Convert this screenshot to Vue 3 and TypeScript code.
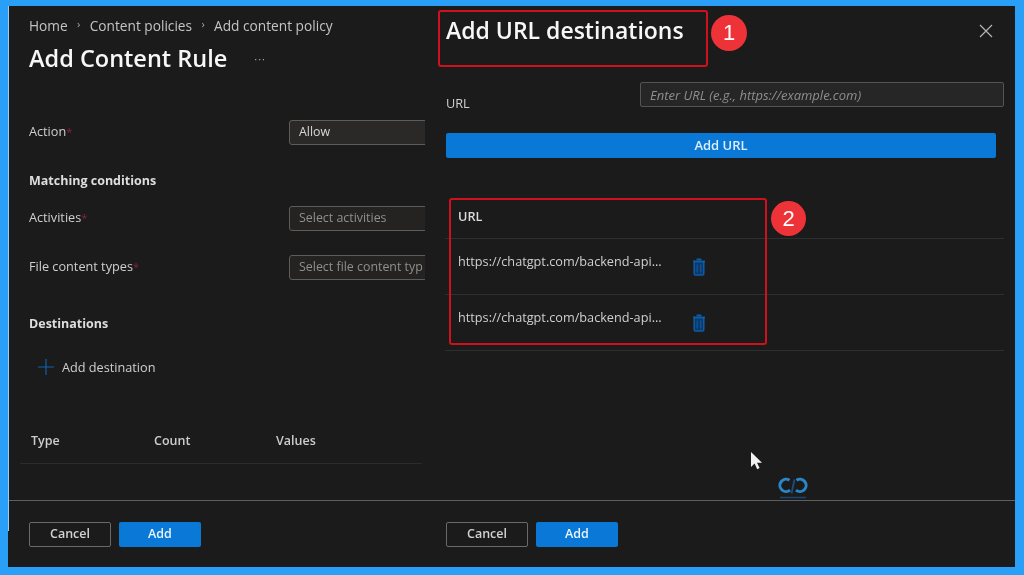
<script setup lang="ts">
const urls: string[] = ['https://chatgpt.com/backend-api...', 'https://chatgpt.com/backend-api...']
const fields = [
  { label: 'Activities', text: 'Select activities', gap: 'first' },
  { label: 'File content types', text: 'Select file content typ', gap: 'next' },
]
</script>

<template>
  <div class="screen">
    <div class="window">
      <div class="pane left">
        <div class="pane-body left-body">
          <nav class="crumbs">
            <span>Home</span><i class="sep">›</i><span>Content policies</span><i class="sep">›</i><span>Add content policy</span>
          </nav>
          <div class="title-row">
            <h1 class="rule-title">Add Content Rule</h1>
            <span class="more">···</span>
          </div>
          <div class="form-row action-row">
            <label>Action<b>*</b></label>
            <div class="select value">Allow</div>
          </div>
          <h2 class="matching">Matching conditions</h2>
          <div v-for="f in fields" :key="f.label" class="form-row" :class="f.gap">
            <label>{{ f.label }}<b>*</b></label>
            <div class="select">{{ f.text }}</div>
          </div>
          <h2 class="destinations">Destinations</h2>
          <div class="add-dest">
            <svg width="16" height="16" viewBox="0 0 16 16" class="plus">
              <path d="M8 0v16M0 8h16" stroke="#0e62ad" stroke-width="1.2" fill="none" />
            </svg>
            <span>Add destination</span>
          </div>
          <div class="dest-table">
            <span>Type</span><span>Count</span><span>Values</span>
          </div>
        </div>
        <footer class="pane-foot">
          <button class="btn ghost" type="button">Cancel</button>
          <button class="btn primary" type="button">Add</button>
        </footer>
      </div>

      <div class="pane right">
        <div class="pane-body right-body">
          <div class="drawer-head">
            <h1>Add URL destinations</h1>
            <svg class="close" width="14" height="14" viewBox="0 0 14 14">
              <path d="M1 1l12 12M13 1L1 13" stroke="#b5b5b5" stroke-width="1.2" fill="none" />
            </svg>
          </div>
          <div class="url-row">
            <label>URL</label>
            <div class="url-input">Enter URL (e.g., https://example.com)</div>
          </div>
          <button class="add-url" type="button">Add URL</button>
          <div class="url-table">
            <div class="url-head">URL</div>
            <div v-for="(u, i) in urls" :key="i" class="url-line">
              <span class="url-text">{{ u }}</span>
              <svg class="trash" width="14" height="18" viewBox="0 0 14 18">
                <path d="M4.6 1.4h4.8M1 3.4h12" stroke="#0f5ca8" stroke-width="1.6" fill="none" />
                <path d="M2.2 3.8h9.6v12a1.3 1.3 0 0 1-1.3 1.3h-7a1.3 1.3 0 0 1-1.3-1.3z" fill="#0b3866" stroke="#0f5ca8" stroke-width="1.5" />
                <path d="M5.2 6.5v8M8.8 6.5v8" stroke="#0f5ca8" stroke-width="1.1" fill="none" />
              </svg>
            </div>
          </div>
        </div>
        <footer class="pane-foot">
          <button class="btn ghost" type="button">Cancel</button>
          <button class="btn primary" type="button">Add</button>
        </footer>
      </div>

      <div class="edge"></div>
      <div class="mark mark-one"></div>
      <div class="badge badge-one">1</div>
      <div class="mark mark-two"></div>
      <div class="badge badge-two">2</div>

      <svg class="cursor" width="14" height="20" viewBox="0 0 14 20">
        <path d="M1 1v15l3.6-3.4 2.6 5.6 2.4-1.1-2.6-5.4h5z" fill="#f2f2f2" />
      </svg>
      <svg class="logo" width="32" height="24" viewBox="0 0 32 24">
        <path d="M12.5 4.2a6.2 6.2 0 1 0 .5 10" stroke="#2a86c8" stroke-width="3" fill="none" />
        <path d="M19.5 4.2a6.2 6.2 0 1 1-.5 10" stroke="#2a86c8" stroke-width="3" fill="none" />
        <path d="M17.5 3.5l-3 14" stroke="#1c4f80" stroke-width="1.8" fill="none" />
        <path d="M3 21.5h26" stroke="#1c4470" stroke-width="1.6" fill="none" />
      </svg>
    </div>
  </div>
</template>

<style>
html, body { margin: 0; padding: 0; }
</style>

<style scoped>
.screen {
  box-sizing: border-box;
  width: 1024px;
  height: 575px;
  padding: 6px 9px 8px 8px;
  background: #2a9ff7;
  font-family: "Open Sans", "Noto Sans", sans-serif;
  font-size: 12.7px;
  color: #cfcfcf;
  overflow: hidden;
}
.window {
  position: relative;
  display: flex;
  height: 100%;
  background: #1b1b1b;
  filter: blur(0.35px);
}
.pane { display: flex; flex-direction: column; min-width: 0; }
.left { width: 417px; flex: none; overflow: hidden; }
.right { flex: 1; }
.pane-body { flex: 1; min-height: 0; padding-left: 21px; }
.pane-foot {
  box-sizing: border-box;
  height: 67px;
  flex: none;
  display: flex;
  gap: 8px;
  padding: 21px 0 0 21px;
  border-top: 1px solid #5e5e5e;
}
.btn {
  box-sizing: border-box;
  width: 82px;
  height: 25px;
  border-radius: 2px;
  font: 600 12.5px "Open Sans", sans-serif;
  padding: 0 0 2px;
}
.ghost { background: transparent; border: 1px solid #6a6a6a; color: #d2d2d2; }
.primary { background: #0a78d6; border: 0; color: #e8f3fc; }

.left-body { padding-top: 10px; }
.crumbs { display: flex; align-items: center; height: 18px; font-size: 13.7px; color: #c4c4c4; white-space: nowrap; }
.sep { font-style: normal; font-size: 11px; width: 22px; text-align: center; margin-top: -3px; color: #a8a8a8; }
.title-row { display: flex; align-items: center; height: 32px; margin-top: 8px; }
h1 { margin: 0; font-size: 23px; font-weight: 600; color: #f7f7f7; line-height: 32px; white-space: nowrap; }
.rule-title { font-size: 23.5px; }
.more { margin-left: 27px; font-size: 11px; color: #aaa; letter-spacing: 1px; }
.form-row { display: flex; align-items: center; height: 25px; white-space: nowrap; }
.form-row label { width: 260px; flex: none; margin-top: -4px; }
.form-row b { color: #8c2236; font-weight: 400; font-size: 11px; }
.action-row { margin-top: 46px; }
.first { margin-top: 15px; }
.next { margin-top: 24px; }
.select {
  box-sizing: border-box;
  flex: none;
  width: 200px;
  height: 25px;
  line-height: 21px;
  padding-left: 9px;
  border: 1px solid #5c5c5c;
  border-radius: 3px;
  background: #242322;
  color: #8f8f8f;
  font-size: 12.4px;
}
.select.value { color: #d8d8d8; font-weight: 500; background: #2a2928; }
h2 { margin: 0; font-weight: 700; line-height: 20px; color: #dedede; font-size: 12.5px; }
.matching { margin-top: 26px; }
.destinations { margin-top: 34px; }
.add-dest { display: flex; align-items: center; gap: 8px; height: 20px; margin-top: 23px; padding-left: 9px; }
.plus { flex: none; }
.dest-table {
  display: grid;
  grid-template-columns: 123px 122px 1fr;
  width: 391px;
  margin: 54px 0 0 -9px;
  padding: 0 0 12px 11px;
  line-height: 20px;
  font-weight: 600;
  font-size: 12.5px;
  color: #cdcdcd;
  border-bottom: 1px solid #2b2b2b;
}

.right-body { padding-right: 11px; }
.drawer-head { display: flex; align-items: center; justify-content: space-between; height: 48px; }
.close { margin-right: 11px; margin-top: 2px; }
.url-row { display: grid; grid-template-columns: 194px 1fr; height: 24px; margin-top: 28px; }
.url-row label { line-height: 20px; margin-top: 11px; }
.url-input {
  box-sizing: border-box;
  height: 25px;
  line-height: 24px;
  padding-left: 9px;
  border: 1px solid #545454;
  border-radius: 2px;
  background: #262626;
  font-style: italic;
  font-size: 13px;
  color: #8e8e8e;
}
.add-url {
  display: block;
  width: 550px;
  height: 25px;
  margin-top: 27px;
  padding: 0 0 2px;
  border: 0;
  border-radius: 2px;
  background: #0a78d6;
  color: #dcedfb;
  font: 600 13px "Open Sans", sans-serif;
}
.url-table { margin: 40px 0 0 -1px; }
.url-head {
  box-sizing: border-box;
  height: 41px;
  padding: 8px 0 0 13px;
  line-height: 20px;
  font-weight: 600;
  color: #dcdcdc;
  border-bottom: 1px solid #2f2f2f;
}
.url-line {
  box-sizing: border-box;
  display: flex;
  height: 56px;
  padding: 12px 0 0 13px;
  border-bottom: 1px solid #2f2f2f;
}
.url-text {
  width: 205px;
  height: 20px;
  line-height: 20px;
  white-space: nowrap;
  font-size: 12.7px;
  color: #cfcfcf;
}
.trash { margin: 7px 0 0 29px; flex: none; }

.edge { position: absolute; left: 0; top: 0; width: 1px; height: 525px; background: #9ccbee; }
.mark { position: absolute; box-sizing: border-box; border: 2px solid #d0101c; border-radius: 3px; }
.mark-one { left: 430px; top: 4px; width: 270px; height: 57px; }
.mark-two { left: 441px; top: 192px; width: 318px; height: 147px; }
.badge {
  position: absolute;
  display: flex;
  align-items: center;
  justify-content: center;
  border-radius: 50%;
  background: #ee3338;
  color: #fff;
  font: 400 22px "Liberation Sans", sans-serif;
}
.badge-one { left: 703px; top: 9px; width: 36px; height: 36px; }
.badge-two { left: 763px; top: 195px; width: 35px; height: 35px; }
.cursor { position: absolute; left: 742px; top: 445px; }
.logo { position: absolute; left: 769px; top: 470px; }
</style>
